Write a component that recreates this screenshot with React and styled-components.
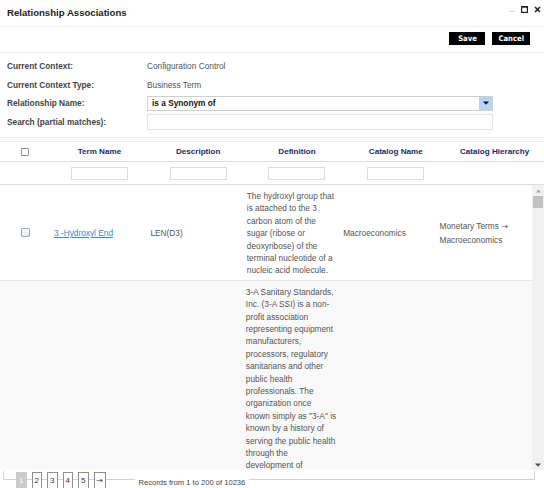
import React from "react";
import styled, { createGlobalStyle } from "styled-components";

const GlobalStyle = createGlobalStyle`
  html, body {
    margin: 0;
    padding: 0;
    background: #fff;
  }
  body {
    font-family: "Liberation Sans", Arial, sans-serif;
    font-size: 8.3px;
    color: #555;
  }
  * {
    box-sizing: border-box;
  }
`;

const Dialog = styled.div`
  width: 544px;
  height: 488px;
  display: flex;
  flex-direction: column;
  overflow: hidden;
  background: #fff;
`;

const TitleBar = styled.div`
  flex: none;
  height: 27px;
  display: flex;
  justify-content: space-between;
  align-items: flex-start;
  padding: 5px 3px 0 7px;
  border-bottom: 1px solid #f1f1f1;
`;

const Title = styled.h1`
  margin: 2px 0 0;
  font-size: 9.6px;
  font-weight: bold;
  color: #222;
`;

const WindowTools = styled.div`
  display: flex;
  align-items: center;
  gap: 6px;
  svg {
    display: block;
  }
`;

const Toolbar = styled.div`
  flex: none;
  height: 26px;
  display: flex;
  justify-content: flex-end;
  align-items: flex-start;
  gap: 7px;
  padding: 5px 14px 0 0;
  border-bottom: 1px solid #f1f1f1;
`;

const ActionButton = styled.button`
  height: 13px;
  min-width: 36px;
  padding: 0 6px;
  border: none;
  background: #000;
  color: #fff;
  font-family: "DejaVu Sans Condensed", "DejaVu Sans", sans-serif;
  font-weight: bold;
  font-size: 7.6px;
  line-height: 13px;
  cursor: pointer;
`;

const Form = styled.div`
  flex: none;
  display: grid;
  grid-template-columns: 140px 346px;
  grid-auto-rows: 18.6px;
  align-items: center;
  padding: 4px 0 6px 7px;
  border-bottom: 1px solid #efefef;
`;

const Label = styled.div`
  font-weight: bold;
  color: #444;
`;

const Value = styled.div`
  color: #555;
`;

const Select = styled.div`
  height: 15px;
  display: flex;
  align-items: stretch;
  border: 1px solid #cfcfcf;
  font-weight: bold;
  color: #111;
`;

const SelectText = styled.span`
  flex: 1;
  padding-left: 4px;
  line-height: 13px;
`;

const SelectArrow = styled.span`
  width: 13px;
  background: #b6d4f4;
  display: flex;
  align-items: center;
  justify-content: center;
`;

const SearchInput = styled.input`
  height: 16px;
  width: 100%;
  border: 1px solid #e6e6e6;
  outline: none;
  padding: 0 4px;
  font: inherit;
`;

const GridRow = styled.div`
  display: grid;
  grid-template-columns: 50px repeat(5, 1fr);
  align-items: center;
`;

const HeadRow = styled(GridRow)`
  flex: none;
  height: 21px;
  margin-top: 3px;
  border-top: 1px solid #efefef;
  border-bottom: 1px solid #dedede;
`;

const HeadCell = styled.div`
  text-align: center;
  font-weight: bold;
  font-size: 8.1px;
  color: #1d2a60;
`;

const FilterRow = styled(GridRow)`
  flex: none;
  height: 23px;
  border-bottom: 1px solid #dedede;
  justify-items: center;
`;

const FilterInput = styled.input`
  width: 57px;
  height: 13px;
  border: 1px solid #dcdcdc;
  outline: none;
  padding: 0 2px;
  font: inherit;
`;

const Check = styled.span`
  display: block;
  justify-self: center;
  width: ${(p) => p.$size}px;
  height: ${(p) => p.$size}px;
  border: 1px solid ${(p) => (p.$soft ? "#9ba7b8" : "#8a8a8a")};
  border-radius: 1px;
  background: ${(p) =>
    p.$soft ? "linear-gradient(#fbfcfd, #e3e8ee)" : "#fff"};
`;

const Body = styled.div`
  flex: 1;
  min-height: 0;
  display: flex;
`;

const Rows = styled.div`
  flex: 1;
  min-width: 0;
  overflow: hidden;
`;

const DataRow = styled(GridRow)`
  background: ${(p) => (p.$alt ? "#f9f9f9" : "#fff")};
  border-bottom: 1px solid #e6e6e6;
`;

const Cell = styled.div`
  padding: 4.5px 4px 3.5px;
  line-height: 12.4px;
  color: #555;
`;

const Line = styled.span`
  display: block;
  white-space: nowrap;
`;

const Arrow = styled.span`
  font-family: "DejaVu Sans", sans-serif;
  font-size: 8px;
`;

const TermLink = styled.a`
  color: #3d86cc;
  text-decoration: underline;
  cursor: pointer;
`;

const Scrollbar = styled.div`
  flex: none;
  width: 12px;
  display: flex;
  flex-direction: column;
  align-items: center;
  background: #f1f1f1;
`;

const ScrollArrow = styled.div`
  height: 11px;
  display: flex;
  align-items: center;
  justify-content: center;
`;

const ScrollThumb = styled.div`
  width: 10px;
  height: 12px;
  background: #c1c1c1;
`;

const ScrollSpace = styled.div`
  flex: 1;
`;

const Footer = styled.div`
  flex: none;
  height: 18px;
  display: flex;
  align-items: flex-start;
  gap: 5px;
  padding: 2px 0 0 16px;
  background:
    linear-gradient(#d4d4d4, #d4d4d4) no-repeat 3px 9px / 532px 1px,
    linear-gradient(#d4d4d4, #d4d4d4) no-repeat 3px 1px / 1px 9px,
    linear-gradient(#d4d4d4, #d4d4d4) no-repeat 534px 1px / 1px 9px;
`;

const PageBox = styled.span`
  width: ${(p) => (p.$wide ? 12 : 10.5)}px;
  height: 17px;
  display: flex;
  justify-content: center;
  padding-top: 3px;
  border: 1px solid ${(p) => (p.$active ? "#cbcbcb" : "#8f8f8f")};
  background: ${(p) => (p.$active ? "#cbcbcb" : "#fff")};
  color: ${(p) => (p.$active ? "#fff" : "#333")};
  font-size: 8px;
`;

const Records = styled.span`
  margin-left: 24px;
  margin-top: 5px;
  padding: 0 4px;
  background: #fff;
  color: #444;
  font-size: 7.6px;
  line-height: 11px;
`;

const columns = [
  "Term Name",
  "Description",
  "Definition",
  "Catalog Name",
  "Catalog Hierarchy",
];

const rows = [
  {
    id: 1,
    term: "3 -Hydroxyl End",
    description: "LEN(D3)",
    definition: [
      "The hydroxyl group that",
      "is attached to the 3",
      "carbon atom of the",
      "sugar (ribose or",
      "deoxyribose) of the",
      "terminal nucleotide of a",
      "nucleic acid molecule.",
    ],
    catalog: "Macroeconomics",
    hierarchy: ["Monetary Terms", "Macroeconomics"],
  },
  {
    id: 2,
    definition: [
      "3-A Sanitary Standards,",
      "Inc. (3-A SSI) is a non-",
      "profit association",
      "representing equipment",
      "manufacturers,",
      "processors, regulatory",
      "sanitarians and other",
      "public health",
      "professionals. The",
      "organization once",
      "known simply as \"3-A\" is",
      "known by a history of",
      "serving the public health",
      "through the",
      "development of",
      "standards and accepted",
      "practices for equipment",
      "and systems.",
    ],
  },
];

const pages = ["1", "2", "3", "4", "5"];

const TriangleDown = ({ color = "#111" }) => (
  <svg width="6" height="4" viewBox="0 0 6 4">
    <path d="M0 0.5H6L3 3.8Z" fill={color} />
  </svg>
);

const TriangleUp = ({ color }) => (
  <svg width="5" height="4" viewBox="0 0 5 4">
    <path d="M0 3.5H5L2.5 0.5Z" fill={color} />
  </svg>
);

const App = () => {
  return (
    <Dialog>
      <GlobalStyle />
      <TitleBar>
        <Title>Relationship Associations</Title>
        <WindowTools>
          <svg width="6" height="8" viewBox="0 0 6 8">
            <path d="M0 6.5H6" stroke="#dedede" strokeWidth="1" />
          </svg>
          <svg width="7" height="7" viewBox="0 0 7 7">
            <rect x="0.6" y="0.6" width="5.8" height="5.8" fill="none" stroke="#222" strokeWidth="1.2" />
            <path d="M0.6 1.2H6.4" stroke="#222" strokeWidth="1" />
          </svg>
          <svg width="7" height="7" viewBox="0 0 7 7">
            <path d="M1 1L6 6M6 1L1 6" stroke="#222" strokeWidth="1.6" />
          </svg>
        </WindowTools>
      </TitleBar>

      <Toolbar>
        <ActionButton>Save</ActionButton>
        <ActionButton>Cancel</ActionButton>
      </Toolbar>

      <Form>
        <Label>Current Context:</Label>
        <Value>Configuration Control</Value>
        <Label>Current Context Type:</Label>
        <Value>Business Term</Value>
        <Label>Relationship Name:</Label>
        <Select>
          <SelectText>is a Synonym of</SelectText>
          <SelectArrow>
            <TriangleDown />
          </SelectArrow>
        </Select>
        <Label>Search (partial matches):</Label>
        <SearchInput />
      </Form>

      <HeadRow>
        <Check $size={8} />
        {columns.map((c) => (
          <HeadCell key={c}>{c}</HeadCell>
        ))}
      </HeadRow>

      <FilterRow>
        <span />
        <FilterInput />
        <FilterInput />
        <FilterInput />
        <FilterInput />
        <span />
      </FilterRow>

      <Body>
        <Rows>
          {rows.map((row, i) => (
            <DataRow key={row.id} $alt={i % 2 === 1}>
              {row.term ? <Check $size={9} $soft /> : <span />}
              <Cell>{row.term && <TermLink>{row.term}</TermLink>}</Cell>
              <Cell>{row.description}</Cell>
              <Cell>
                {row.definition.map((l) => (
                  <Line key={l}>{l}</Line>
                ))}
              </Cell>
              <Cell>{row.catalog}</Cell>
              <Cell>
                {row.hierarchy &&
                  row.hierarchy.map((l, j) => (
                    <Line key={l}>
                      {l}
                      {j < row.hierarchy.length - 1 && (
                        <Arrow> {"\u2192"}</Arrow>
                      )}
                    </Line>
                  ))}
              </Cell>
            </DataRow>
          ))}
        </Rows>
        <Scrollbar>
          <ScrollArrow>
            <TriangleUp color="#a3a3a3" />
          </ScrollArrow>
          <ScrollThumb />
          <ScrollSpace />
          <ScrollArrow>
            <TriangleDown color="#505050" />
          </ScrollArrow>
        </Scrollbar>
      </Body>

      <Footer>
        {pages.map((p, i) => (
          <PageBox key={p} $active={i === 0}>
            {p}
          </PageBox>
        ))}
        <PageBox $wide>
          <Arrow>{"\u2192"}</Arrow>
        </PageBox>
        <Records>Records from 1 to 200 of 10236</Records>
      </Footer>
    </Dialog>
  );
};

export default App;
